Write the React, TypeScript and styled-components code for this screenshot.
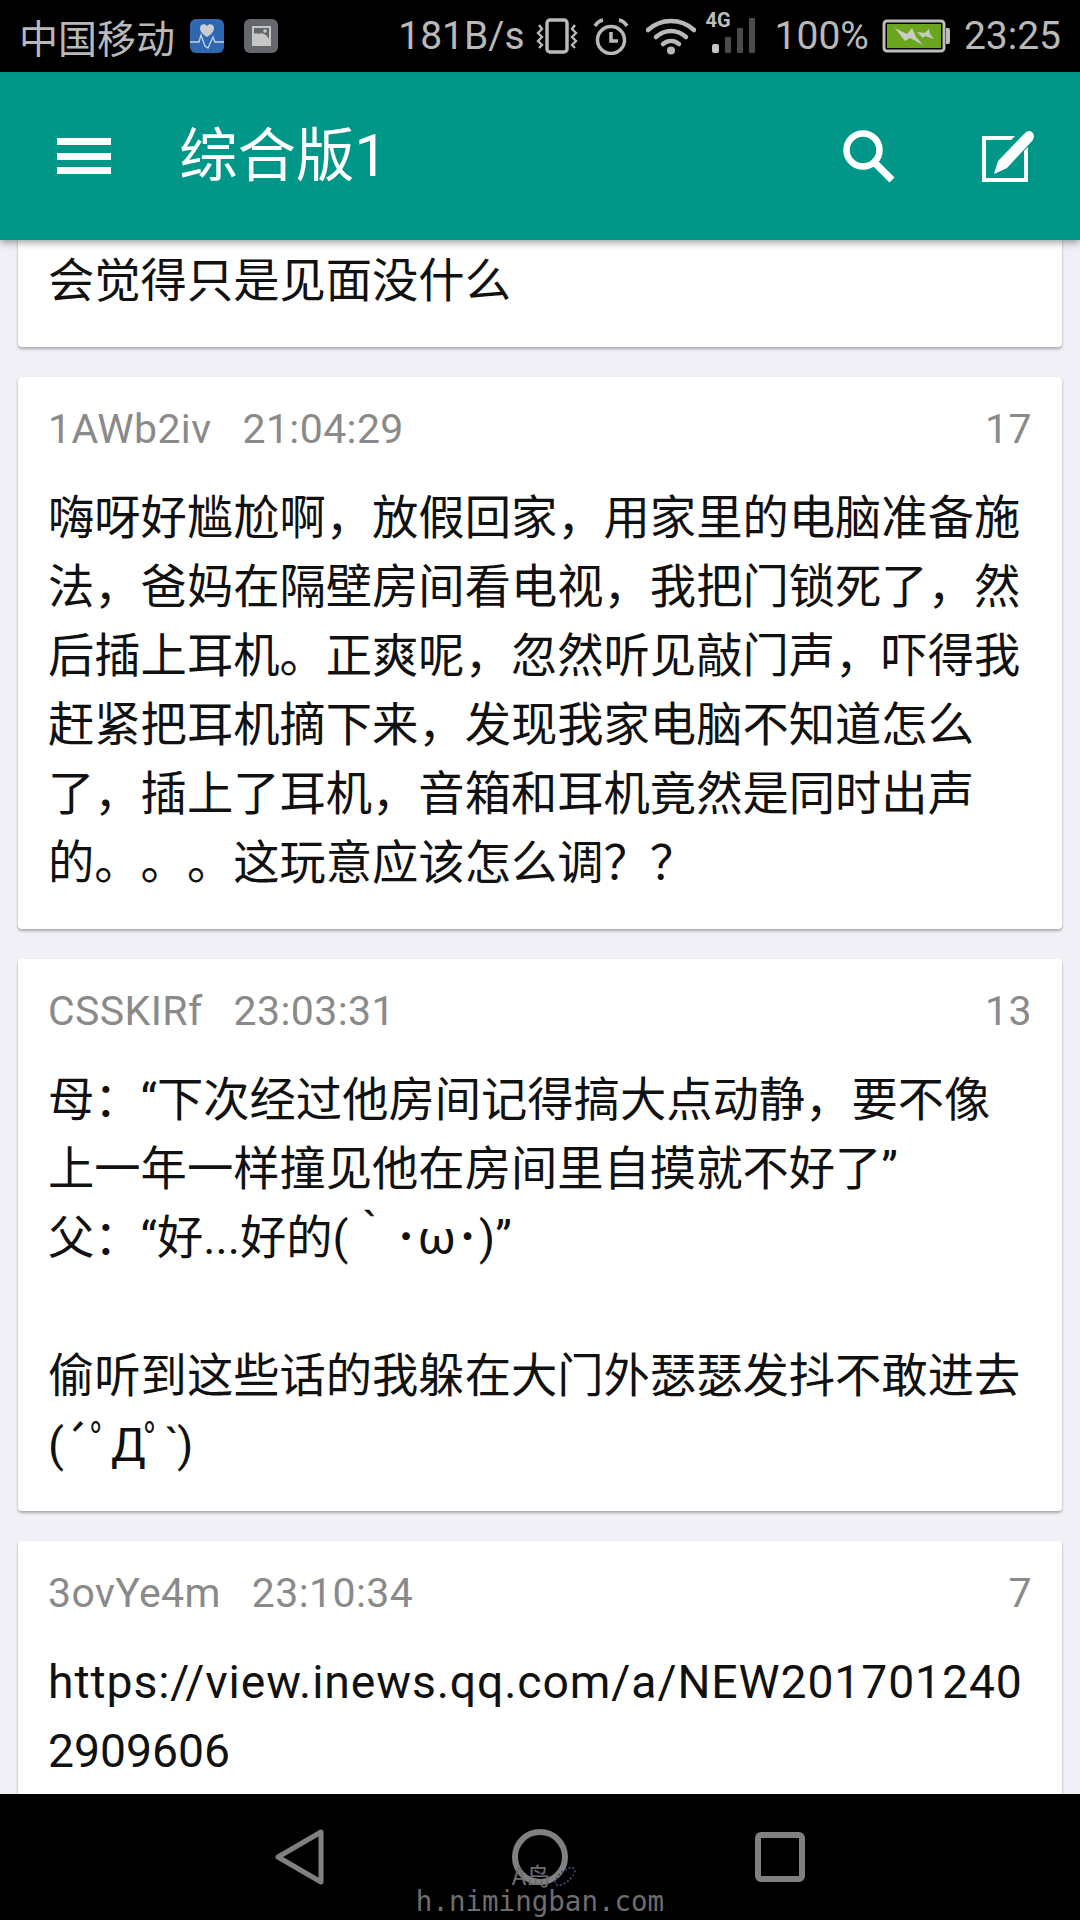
import React from 'react';
import styled, { createGlobalStyle } from 'styled-components';

const GlobalStyle = createGlobalStyle`
  html, body {
    margin: 0;
    padding: 0;
    background: #000;
  }
  #root {
    width: 1080px;
    height: 1920px;
  }
`

const Page = styled.div`
  position: relative;
  display: flex;
  flex-direction: column;
  width: 1080px;
  height: 1920px;
  overflow: hidden;
  background: #f0f0f6;
  font-family: Roboto, "Noto Sans CJK SC", sans-serif;
  text-spacing-trim: space-all;
`

const StatusBar = styled.div`
  display: flex;
  flex: none;
  align-items: center;
  justify-content: space-between;
  height: 72px;
  padding: 0 19px;
  background: #000;
  color: #b9b9b9;
`
const StatusGroup = styled.div`
  display: flex;
  align-items: center;
`
const StatusItem = styled.div<{ $left?: number; $up?: number }>`
  position: relative;
  display: flex;
  margin-left: ${props => props.$left ?? 0}px;
  margin-bottom: ${props => props.$up ?? 0}px;
`
const Carrier = styled.span`
  font-family: "Noto Sans CJK SC", sans-serif;
  font-size: 39px;
  line-height: 72px;
`
const StatusText = styled.span`
  font-size: 39px;
  line-height: 72px;
  white-space: nowrap;
`
const NetworkType = styled.span`
  position: absolute;
  top: 0;
  left: 0;
  color: #bdbdbd;
  font-size: 20px;
  font-weight: 700;
  line-height: 14px;
`

const Toolbar = styled.div`
  position: relative;
  z-index: 2;
  display: flex;
  flex: none;
  align-items: center;
  height: 168px;
  padding: 0 46px 0 57px;
  background: #009688;
  box-shadow: 0 3px 7px rgba(0, 0, 0, 0.35);
  color: #fff;
`
const Title = styled.div`
  flex: 1;
  margin-left: 68px;
  font-size: 58.5px;
  line-height: 168px;
`
const ToolbarActions = styled.div`
  display: flex;
  align-items: center;
  gap: 86px;
`

const List = styled.div`
  display: flex;
  flex: 1;
  flex-direction: column;
  gap: 30px;
  min-height: 0;
  overflow: hidden;
`
const Card = styled.div<{ $clipped?: boolean }>`
  flex: none;
  margin: 0 18px;
  padding: ${props => props.$clipped ? "7px" : "0"} 30px 31px 30px;
  background: #fff;
  border-radius: ${props => props.$clipped ? "0 0 4px 4px" : "4px"};
  box-shadow: 0 2px 3px rgba(0, 0, 0, 0.3);
`
const CardHeader = styled.div`
  display: flex;
  align-items: center;
  gap: 31px;
  padding: 28px 0 31px;
  color: #8a8a8a;
  font-size: 41px;
  letter-spacing: 0.4px;
  line-height: 48px;
`
const Count = styled.span`
  margin-left: auto;
`
const Body = styled.div`
  color: #111;
  font-size: 46.3px;
  line-height: 69px;
`
const Line = styled.div<{ $spacing: number }>`
  min-height: 69px;
  white-space: nowrap;
  letter-spacing: ${props => props.$spacing}px;
`

const NavBar = styled.div`
  position: relative;
  display: flex;
  flex: none;
  align-items: center;
  justify-content: center;
  height: 126px;
  background: #000;
`
const NavSlot = styled.div`
  display: flex;
  justify-content: center;
  width: 240px;
`
const Watermark = styled.div`
  position: absolute;
  left: 414px;
  bottom: 4px;
  width: 252px;
  color: #6e6e6e;
  font-family: "DejaVu Sans Mono", monospace;
  font-size: 27.5px;
  line-height: 30px;
  text-align: center;
  white-space: nowrap;
`
const WatermarkLogo = styled.div`
  padding-right: 18px;
  font-family: "Noto Sans CJK SC", sans-serif;
  font-size: 24px;
  line-height: 22px;
`
const WatermarkBlot = styled.div`
  position: absolute;
  top: 6px;
  left: 138px;
  width: 22px;
  height: 9px;
  border: 2px dotted #3a4570;
  border-radius: 50%;
  transform: rotate(-40deg);
`

const HeartAppIcon = () => (
  <svg width="34" height="34" viewBox="0 0 34 34">
    <rect width="34" height="34" rx="6" fill="#2f67b1" />
    <path d="M17 18 C12 15 10 12 10 9 C10 5 15 4 17 7 C19 4 24 5 24 9 C24 12 22 15 17 18Z" fill="#c9ccd2" />
    <path d="M0 23 H9 L11 16 L15 27 L18 29 L23 18 L25 23 H34" fill="none" stroke="#c4d4e8" strokeWidth="1.300" />
  </svg>
)

const GalleryAppIcon = () => (
  <svg width="34" height="34" viewBox="0 0 34 34">
    <rect width="34" height="34" rx="6" fill="#64686d" />
    <rect x="8" y="7" width="19" height="20" fill="#c6c6c6" />
    <path d="M10 9 H25 V20 C22 15 18 13 15 15 C13 14 11 14 10 15Z" fill="#64686d" />
    <circle cx="21" cy="12" r="1.800" fill="#c6c6c6" />
  </svg>
)

const VibrateIcon = () => (
  <svg width="42" height="36" viewBox="0 0 42 36" fill="none" stroke="#b9b9b9">
    <rect x="11" y="2" width="20" height="32" rx="3" strokeWidth="3.500" />
    <path d="M3 7 L6 11 L2 15 L6 19 L2 23 L6 27 L3 30" strokeWidth="2.400" />
    <path d="M39 7 L36 11 L40 15 L36 19 L40 23 L36 27 L39 30" strokeWidth="2.400" />
  </svg>
)

const AlarmIcon = () => (
  <svg width="36" height="37" viewBox="0 0 36 37" fill="none" stroke="#b9b9b9" strokeWidth="3.500">
    <circle cx="18" cy="22" r="13.500" />
    <path d="M18 14 V23 H25" />
    <path d="M2 8 Q5 3 10 2" />
    <path d="M34 8 Q31 3 26 2" />
  </svg>
)

const WifiIcon = () => (
  <svg width="50" height="38" viewBox="0 0 50 38" fill="none" stroke="#b9b9b9" strokeWidth="4.500" strokeLinecap="round">
    <path d="M2 13 C15 1 35 1 48 13" />
    <path d="M10 20 C19 12 31 12 40 20" />
    <path d="M17 27 C22 23 28 23 33 27" />
    <circle cx="25" cy="33.500" r="4" fill="#b9b9b9" stroke="none" />
  </svg>
)

const SignalBars = () => (
  <svg width="50" height="40" viewBox="0 0 50 40">
    <rect x="6" y="31" width="7" height="9" rx="2" fill="#c4c4c4" />
    <rect x="19" y="24" width="6" height="16" rx="1" fill="#4a4a4a" />
    <rect x="31" y="15" width="6" height="25" rx="1" fill="#4a4a4a" />
    <rect x="43" y="5" width="6" height="35" rx="1" fill="#4a4a4a" />
  </svg>
)

const BatteryIcon = () => (
  <svg width="68" height="34" viewBox="0 0 68 34">
    <rect x="2" y="2" width="60" height="30" rx="3" fill="none" stroke="#bdbdbd" strokeWidth="3" />
    <rect x="5" y="5" width="54" height="24" fill="#6aa51e" />
    <path d="M64 9 H66 Q68 9 68 11 V23 Q68 25 66 25 H64Z" fill="#bdbdbd" />
    <path d="M12.700 9 L25 15 L30 9 L34 18 L41 26 L28 19 L23 22Z" fill="#c9ccc4" />
    <path d="M35 13 L43 14 L47 10 L48 15 L52 20 L43 17 L41 19Z" fill="#c9ccc4" />
  </svg>
)

const MenuIcon = () => (
  <svg width="54" height="36" viewBox="0 0 54 36" fill="#fff">
    <rect width="54" height="7" />
    <rect y="15" width="54" height="7" />
    <rect y="29" width="54" height="7" />
  </svg>
)

const SearchIcon = () => (
  <svg width="52" height="53" viewBox="0 0 52 53" fill="none" stroke="#fff" strokeWidth="6.500">
    <circle cx="20" cy="20" r="16.500" />
    <path d="M31 32 L49 50" strokeWidth="7" />
  </svg>
)

const EditIcon = () => (
  <svg width="53" height="53" viewBox="0 0 53 53">
    <path d="M1 6 H34 L30 10 H5 V48 H43 V21 L47 17 V52 H1Z" fill="#fff" />
    <path d="M13 44 L17 31 L43 4 Q47 -1 51 2 Q55 6 51 11 L26 38Z" fill="#fff" />
  </svg>
)

const BackIcon = () => (
  <svg width="50" height="56" viewBox="0 0 50 56" fill="none" stroke="#808080" strokeWidth="5" strokeLinejoin="round">
    <path d="M46 3 V53 L3 28Z" />
  </svg>
)
const HomeIcon = () => (
  <svg width="56" height="56" viewBox="0 0 56 56" fill="none" stroke="#808080" strokeWidth="6">
    <circle cx="28" cy="28" r="25" />
  </svg>
)
const RecentIcon = () => (
  <svg width="50" height="50" viewBox="0 0 50 50" fill="none" stroke="#808080" strokeWidth="6">
    <rect x="3" y="3" width="44" height="44" rx="3" />
  </svg>
)

type Post = {
  uid: string
  time: string
  count: number
  lines: string[]
}

const posts: Post[] = [
  {
    uid: "1AWb2iv",
    time: "21:04:29",
    count: 17,
    lines: [
      "嗨呀好尴尬啊，放假回家，用家里的电脑准备施",
      "法，爸妈在隔壁房间看电视，我把门锁死了，然",
      "后插上耳机。正爽呢，忽然听见敲门声，吓得我",
      "赶紧把耳机摘下来，发现我家电脑不知道怎么",
      "了，插上了耳机，音箱和耳机竟然是同时出声",
      "的。。。这玩意应该怎么调？？",
    ],
  },
  {
    uid: "CSSKIRf",
    time: "23:03:31",
    count: 13,
    lines: [
      "母：“下次经过他房间记得搞大点动静，要不像",
      "上一年一样撞见他在房间里自摸就不好了”",
      "父：“好...好的(｀･ω･)”",
      "",
      "偷听到这些话的我躲在大门外瑟瑟发抖不敢进去",
      "(´ﾟДﾟ`)",
    ],
  },
  {
    uid: "3ovYe4m",
    time: "23:10:34",
    count: 7,
    lines: [
      "https://view.inews.qq.com/a/NEW201701240",
      "2909606",
    ],
  },
]

// latin runs sit a bit wider in the app than here, the kaomoji a bit tighter
const lineSpacing = (line: string) => {
  if (line.startsWith("http")) return 0.9
  if (line.startsWith("(´")) return -2
  return 0
}

function App() {
  return (
    <Page>
      <GlobalStyle />
      <StatusBar>
        <StatusGroup>
          <Carrier>中国移动</Carrier>
          <StatusItem $left={15}><HeartAppIcon /></StatusItem>
          <StatusItem $left={20}><GalleryAppIcon /></StatusItem>
        </StatusGroup>
        <StatusGroup>
          <StatusText>181B/s</StatusText>
          <StatusItem $left={11}><VibrateIcon /></StatusItem>
          <StatusItem $left={15}><AlarmIcon /></StatusItem>
          <StatusItem $left={17}><WifiIcon /></StatusItem>
          <StatusItem $left={10} $up={6}>
            <SignalBars />
            <NetworkType>4G</NetworkType>
          </StatusItem>
          <StatusItem $left={19}><StatusText>100%</StatusText></StatusItem>
          <StatusItem $left={13}><BatteryIcon /></StatusItem>
          <StatusItem $left={14}><StatusText>23:25</StatusText></StatusItem>
        </StatusGroup>
      </StatusBar>
      <Toolbar>
        <MenuIcon />
        <Title>综合版1</Title>
        <ToolbarActions>
          <SearchIcon />
          <EditIcon />
        </ToolbarActions>
      </Toolbar>
      <List>
        <Card $clipped>
          <Body>
            <Line $spacing={0}>会觉得只是见面没什么</Line>
          </Body>
        </Card>
        {posts.map(post => (
          <Card key={post.uid}>
            <CardHeader>
              <span>{post.uid}</span>
              <span>{post.time}</span>
              <Count>{post.count}</Count>
            </CardHeader>
            <Body>
              {post.lines.map((line, index) => (
                <Line key={index} $spacing={lineSpacing(line)}>{line}</Line>
              ))}
            </Body>
          </Card>
        ))}
      </List>
      <NavBar>
        <NavSlot><BackIcon /></NavSlot>
        <NavSlot><HomeIcon /></NavSlot>
        <NavSlot><RecentIcon /></NavSlot>
        <Watermark>
          <WatermarkLogo>A岛</WatermarkLogo>
          <WatermarkBlot />
          h.nimingban.com
        </Watermark>
      </NavBar>
    </Page>
  )
}

export default App
